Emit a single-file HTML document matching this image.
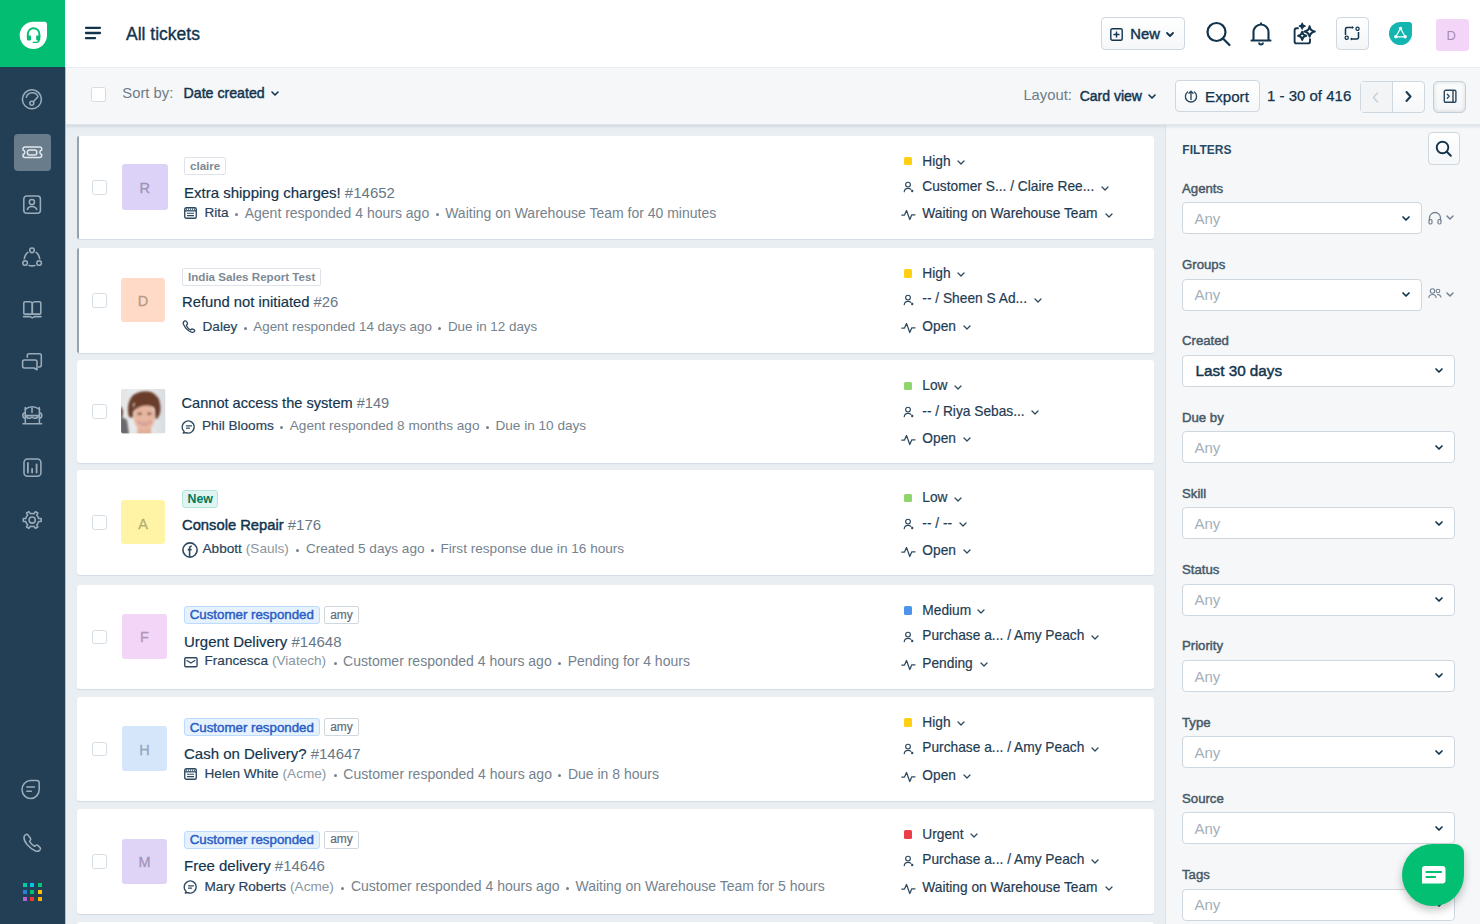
<!DOCTYPE html>
<html><head><meta charset="utf-8"><title>All tickets</title>
<style>
html,body{margin:0;padding:0;width:1480px;height:924px;overflow:hidden;background:#ebeff3;}
body{position:relative;font-family:"Liberation Sans",sans-serif;}
.t{position:absolute;white-space:nowrap;line-height:1;}
.b{position:absolute;box-sizing:border-box;}
.s{position:absolute;overflow:visible;}
</style></head><body>

<div class="b" style="left:65.00px;top:124.00px;width:1100.00px;height:800.00px;background:#e9eef2;"></div>
<div class="b" style="left:1165.00px;top:124.00px;width:315.00px;height:800.00px;background:#f5f7f9;border-left:1px solid #dde3e9;"></div>
<div class="b" style="left:65.00px;top:125.00px;width:1415.00px;height:4.00px;background:linear-gradient(rgba(18,52,77,0.10),rgba(18,52,77,0));"></div>
<div class="b" style="left:65.00px;top:67.00px;width:1415.00px;height:58.00px;background:#f5f7f9;border-top:1px solid #e9edf1;border-bottom:1px solid #dfe5ea;"></div>
<div class="b" style="left:65.00px;top:0.00px;width:1415.00px;height:67.00px;background:#ffffff;"></div>
<div class="b" style="left:0.00px;top:0.00px;width:65.00px;height:924.00px;background:#233f55;"></div>
<div class="b" style="left:0.00px;top:0.00px;width:65.00px;height:67.00px;background:#02bd72;"></div>
<div class="b" style="left:65.00px;top:67.00px;width:1.00px;height:857.00px;background:#b3c0ca;"></div>
<svg class="s" style="left:19.00px;top:21.00px;" width="29" height="29" viewBox="0 0 29 29" fill="none"><path d="M14.35 0.7 H25.5 a2.5 2.5 0 0 1 2.5 2.5 V14.35 A13.65 13.65 0 1 1 14.35 0.7 Z" fill="#fff"/><path d="M8.8 16 V13 A5.8 5.8 0 0 1 20.4 13 V16" stroke="#02bd72" stroke-width="1.9"/><rect x="7.9" y="14.5" width="4.1" height="4.9" rx="0.8" fill="#02bd72"/><rect x="17.2" y="14.5" width="4.1" height="4.9" rx="0.8" fill="#02bd72"/><path d="M20 19 Q20 21.4 17.5 21.4 H14.3" stroke="#02bd72" stroke-width="1.3" stroke-linecap="round"/></svg>
<div class="b" style="left:14.00px;top:134.00px;width:36.60px;height:36.70px;background:#687c8c;border-radius:4px;"></div>
<svg class="s" style="left:21.00px;top:88.00px;" width="22" height="22" viewBox="0 0 22 22" fill="none"><circle cx="10.9" cy="11.3" r="9.5" stroke="#9aacba" stroke-width="1.55" stroke-linecap="round" stroke-linejoin="round"/><path d="M5.3 9.3 A6.2 6.2 0 0 1 17 8.5" stroke="#9aacba" stroke-width="1.55" stroke-linecap="round" stroke-linejoin="round"/><circle cx="10.8" cy="15.3" r="2" stroke="#9aacba" stroke-width="1.55" stroke-linecap="round" stroke-linejoin="round"/><path d="M12.3 13.8 L16.6 9.2" stroke="#9aacba" stroke-width="1.55" stroke-linecap="round" stroke-linejoin="round"/></svg>
<svg class="s" style="left:21.00px;top:144.00px;" width="22" height="16" viewBox="0 0 22 16" fill="none"><path d="M4 2.9 H18.7 Q20.7 2.9 20.7 4.9 V5.9 A2.3 2.3 0 0 0 20.7 10.4 V11.4 Q20.7 13.4 18.7 13.4 H4 Q2 13.4 2 11.4 V10.4 A2.3 2.3 0 0 0 2 5.9 V4.9 Q2 2.9 4 2.9 Z" stroke="#e3e8ec" stroke-width="1.5" stroke-linecap="round" stroke-linejoin="round"/><rect x="6.45" y="6" width="9.3" height="4.9" rx="2" stroke="#e3e8ec" stroke-width="1.5" stroke-linecap="round" stroke-linejoin="round"/></svg>
<svg class="s" style="left:21.00px;top:194.00px;" width="22" height="22" viewBox="0 0 22 22" fill="none"><rect x="2.8" y="2" width="16.6" height="17.2" rx="3" stroke="#9aacba" stroke-width="1.55" stroke-linecap="round" stroke-linejoin="round"/><circle cx="10.9" cy="8" r="2.6" stroke="#9aacba" stroke-width="1.55" stroke-linecap="round" stroke-linejoin="round"/><path d="M6.4 15.5 Q7 12.4 10.9 12.4 Q14.8 12.4 15.8 15.5" stroke="#9aacba" stroke-width="1.55" stroke-linecap="round" stroke-linejoin="round"/></svg>
<svg class="s" style="left:21.00px;top:246.00px;" width="22" height="22" viewBox="0 0 22 22" fill="none"><circle cx="11" cy="4.3" r="2.3" stroke="#9aacba" stroke-width="1.55" stroke-linecap="round" stroke-linejoin="round"/><circle cx="4.1" cy="17" r="2.3" stroke="#9aacba" stroke-width="1.55" stroke-linecap="round" stroke-linejoin="round"/><circle cx="18.1" cy="17" r="2.3" stroke="#9aacba" stroke-width="1.55" stroke-linecap="round" stroke-linejoin="round"/><path d="M6.7 6.4 Q3.8 9 3.3 12.6" stroke="#9aacba" stroke-width="1.55" stroke-linecap="round" stroke-linejoin="round"/><path d="M15.3 6.4 Q18.2 9 18.7 12.6" stroke="#9aacba" stroke-width="1.55" stroke-linecap="round" stroke-linejoin="round"/><path d="M8 19.5 Q11 20.3 14 19.5" stroke="#9aacba" stroke-width="1.55" stroke-linecap="round" stroke-linejoin="round"/></svg>
<svg class="s" style="left:21.00px;top:298.00px;" width="22" height="22" viewBox="0 0 22 22" fill="none"><path d="M11.3 5 Q10.5 3.8 8.5 3.8 H4 Q2.8 3.8 2.8 5 V15.2 Q2.8 16.1 4 16.1 H11.3 Z" stroke="#9aacba" stroke-width="1.55" stroke-linecap="round" stroke-linejoin="round"/><path d="M11.3 5 Q12.1 3.8 14.1 3.8 H18.6 Q19.8 3.8 19.8 5 V15.2 Q19.8 16.1 18.6 16.1 H11.3 Z" stroke="#9aacba" stroke-width="1.55" stroke-linecap="round" stroke-linejoin="round"/><path d="M2.5 18.6 H9.3 L11.3 19.8 L13.3 18.6 H20.1" stroke="#9aacba" stroke-width="1.55" stroke-linecap="round" stroke-linejoin="round"/></svg>
<svg class="s" style="left:21.00px;top:351.00px;" width="22" height="22" viewBox="0 0 22 22" fill="none"><path d="M6.3 6.3 V4.6 Q6.3 2.8 8.1 2.8 H18.5 Q20.3 2.8 20.3 4.6 V14.1 Q20.3 15.9 18.5 15.9 H17.6" stroke="#9aacba" stroke-width="1.55" stroke-linecap="round" stroke-linejoin="round"/><path d="M3.4 9 H14.2 Q16 9 16 10.8 V18.8 L14.2 17.8 L13.2 16.9 H3.4 Q1.6 16.9 1.6 15.1 V10.8 Q1.6 9 3.4 9 Z" stroke="#9aacba" stroke-width="1.55" stroke-linecap="round" stroke-linejoin="round"/></svg>
<svg class="s" style="left:21.00px;top:403.00px;" width="22" height="22" viewBox="0 0 22 22" fill="none"><path d="M4.3 4.5 V20.5 M18.4 4.5 V20.5" stroke="#9aacba" stroke-width="1.55" stroke-linecap="round" stroke-linejoin="round"/><path d="M4.3 6.2 Q11 1.2 18.4 6.2" stroke="#9aacba" stroke-width="1.55" stroke-linecap="round" stroke-linejoin="round"/><path d="M11 5.2 V9.5" stroke="#9aacba" stroke-width="1.55" stroke-linecap="round" stroke-linejoin="round"/><path d="M4.3 12.6 H18.4" stroke="#9aacba" stroke-width="1.55" stroke-linecap="round" stroke-linejoin="round"/><path d="M5.5 13 Q6 15.5 8.5 15.3 Q10 15 11 14 Q12 15 13.5 15.3 Q16.5 15.5 17 13" stroke="#9aacba" stroke-width="1.55" stroke-linecap="round" stroke-linejoin="round"/><path d="M4 9.8 Q1.5 10.5 1.8 12.8 Q2.2 15 4.2 15 M18.6 9.8 Q21 10.5 20.8 12.8 Q20.5 15 18.5 15" stroke="#9aacba" stroke-width="1.55" stroke-linecap="round" stroke-linejoin="round"/><path d="M2 20.8 H20.6" stroke="#9aacba" stroke-width="1.55" stroke-linecap="round" stroke-linejoin="round"/></svg>
<svg class="s" style="left:21.00px;top:456.00px;" width="22" height="22" viewBox="0 0 22 22" fill="none"><rect x="3" y="3" width="16.9" height="17.2" rx="3.5" stroke="#9aacba" stroke-width="1.55" stroke-linecap="round" stroke-linejoin="round"/><path d="M6.9 6.9 V16.6 M11.1 12.9 V16.6 M15.6 8.3 V16.6" stroke="#9aacba" stroke-width="1.8" stroke-linecap="round"/></svg>
<svg class="s" style="left:21.00px;top:509.00px;" width="22" height="22" viewBox="0 0 22 22" fill="none"><path d="M17.13 8.11 L17.63 9.52 L20.09 9.59 L20.09 12.41 L17.63 12.48 L17.13 13.89 L16.67 14.69 L15.70 15.83 L16.86 17.99 L14.43 19.40 L13.13 17.31 L11.66 17.58 L10.74 17.58 L9.27 17.31 L7.97 19.40 L5.54 17.99 L6.70 15.83 L5.73 14.69 L5.27 13.89 L4.77 12.48 L2.31 12.41 L2.31 9.59 L4.77 9.52 L5.27 8.11 L5.73 7.31 L6.70 6.17 L5.54 4.01 L7.97 2.60 L9.27 4.69 L10.74 4.42 L11.66 4.42 L13.13 4.69 L14.43 2.60 L16.86 4.01 L15.70 6.17 L16.67 7.31 Z" stroke="#9aacba" stroke-width="1.55" stroke-linecap="round" stroke-linejoin="round"/><circle cx="11.2" cy="11" r="3.1" stroke="#9aacba" stroke-width="1.55" stroke-linecap="round" stroke-linejoin="round"/></svg>
<svg class="s" style="left:20.20px;top:779.00px;" width="22" height="22" viewBox="0 0 22 22" fill="none"><path d="M10.2 1.5 H16.9 Q19.2 1.5 19.2 3.8 V10.2 A8.6 9 0 1 1 10.2 1.5 Z" stroke="#9aacba" stroke-width="1.55" stroke-linecap="round" stroke-linejoin="round"/><path d="M6.9 8 H14.4 M6.9 12.2 H11.3" stroke="#9aacba" stroke-width="1.6" stroke-linecap="round"/></svg>
<svg class="s" style="left:21.00px;top:832.00px;" width="22" height="22" viewBox="0 0 22 22" fill="none"><path d="M5.5 2.2 Q3.5 2.8 3 5 Q2.8 8.5 6 12.5 Q10 17 14.5 19 Q17 19.8 18.7 18.3 Q20 17 19.2 15.8 L17 13.6 Q15.8 12.6 14.6 13.5 L13.7 14.3 Q10.5 12.5 8.5 9.3 L9.3 8.4 Q10.2 7.2 9.3 6 L7 3 Q6.3 2 5.5 2.2 Z" stroke="#9aacba" stroke-width="1.55" stroke-linecap="round" stroke-linejoin="round"/></svg>
<div class="b" style="left:23.00px;top:882.60px;width:4.00px;height:4.00px;background:#00c9a7;"></div>
<div class="b" style="left:30.30px;top:882.60px;width:4.00px;height:4.00px;background:#00c6f0;"></div>
<div class="b" style="left:37.60px;top:882.60px;width:4.00px;height:4.00px;background:#00c873;"></div>
<div class="b" style="left:23.00px;top:889.90px;width:4.00px;height:4.00px;background:#2b7fd4;"></div>
<div class="b" style="left:30.30px;top:889.90px;width:4.00px;height:4.00px;background:#00c26e;"></div>
<div class="b" style="left:37.60px;top:889.90px;width:4.00px;height:4.00px;background:#ffc107;"></div>
<div class="b" style="left:23.00px;top:897.20px;width:4.00px;height:4.00px;background:#b466d0;"></div>
<div class="b" style="left:30.30px;top:897.20px;width:4.00px;height:4.00px;background:#ee3a2b;"></div>
<div class="b" style="left:37.60px;top:897.20px;width:4.00px;height:4.00px;background:#ffb300;"></div>
<svg class="s" style="left:85.00px;top:26.00px;" width="16" height="14" viewBox="0 0 16 14" fill="none"><path d="M1 1.8 H15 M1 7 H15 M1 12.2 H10" stroke="#12344d" stroke-width="2.3" stroke-linecap="round"/></svg>
<div class="t" style="left:126.00px;top:25.69px;font-size:17.5px;font-weight:400;color:#12344d;-webkit-text-stroke:0.35px currentColor;">All tickets</div>
<div class="b" style="left:1101.00px;top:17.00px;width:84.00px;height:33.00px;background:linear-gradient(#fff,#f5f7f9);border:1px solid #cfd7df;border-radius:4px;"></div>
<svg class="s" style="left:1110.00px;top:28.00px;" width="13" height="13" viewBox="0 0 13 13" fill="none"><rect x="0.8" y="0.8" width="11.4" height="11.4" rx="1.5" stroke="#12344d" stroke-width="1.4"/><path d="M6.5 3.5 V9.5 M3.5 6.5 H9.5" stroke="#12344d" stroke-width="1.4"/></svg>
<div class="t" style="left:1130.30px;top:26.81px;font-size:14.75px;font-weight:400;color:#12344d;-webkit-text-stroke:0.45px currentColor;">New</div>
<svg class="s" style="left:1165.50px;top:32.00px;" width="8" height="6" viewBox="0 0 8 6" fill="none"><path d="M1 1 L4 4 L7 1" stroke="#12344d" stroke-width="1.8" stroke-linecap="round" stroke-linejoin="round"/></svg>
<svg class="s" style="left:1206.00px;top:21.00px;" width="25" height="25" viewBox="0 0 25 25" fill="none"><circle cx="10.5" cy="11" r="9" stroke="#12344d" stroke-width="2.2"/><path d="M17 17.5 L23.5 24" stroke="#12344d" stroke-width="2.2" stroke-linecap="round"/></svg>
<svg class="s" style="left:1250.00px;top:21.00px;" width="22" height="24" viewBox="0 0 22 24" fill="none"><path d="M3.5 19 V11 A7.5 7.5 0 0 1 18.5 11 V19" stroke="#12344d" stroke-width="2.1"/><path d="M1.5 19.5 H20.5" stroke="#12344d" stroke-width="2.1" stroke-linecap="round"/><path d="M9 21.5 A2 2 0 0 0 13 21.5" stroke="#12344d" stroke-width="1.8"/><path d="M11 1.5 V3" stroke="#12344d" stroke-width="2"/></svg>
<svg class="s" style="left:1288.00px;top:18.00px;" width="32" height="32" viewBox="0 0 32 32" fill="none"><path d="M10 10.2 H8.6 Q6.6 10.2 6.6 12.2 V23.4 Q6.6 25.4 8.6 25.4 H20 Q22 25.4 22 23.4 V21.1" stroke="#12344d" stroke-width="1.9" stroke-linecap="round"/><path d="M21.6 8.3 Q22.328000000000003 12.772 26.8 13.5 Q22.328000000000003 14.228 21.6 18.7 Q20.872 14.228 16.400000000000002 13.5 Q20.872 12.772 21.6 8.3 Z" stroke="#12344d" stroke-width="2.1" stroke-linejoin="round"/><path d="M14.2 13.700000000000001 Q14.774 17.226 18.299999999999997 17.8 Q14.774 18.374000000000002 14.2 21.9 Q13.626 18.374000000000002 10.1 17.8 Q13.626 17.226 14.2 13.700000000000001 Z" stroke="#12344d" stroke-width="2" stroke-linejoin="round"/><path d="M14.2 5.3 Q14.591999999999999 7.707999999999999 17.0 8.1 Q14.591999999999999 8.491999999999999 14.2 10.899999999999999 Q13.808 8.491999999999999 11.399999999999999 8.1 Q13.808 7.707999999999999 14.2 5.3 Z" stroke="#12344d" stroke-width="1.5" stroke-linejoin="round" fill="#12344d"/></svg>
<div class="b" style="left:1336.00px;top:17.00px;width:33.00px;height:33.00px;background:linear-gradient(#fff,#f3f5f7);border:1px solid #cfd7df;border-radius:4px;"></div>
<svg class="s" style="left:1344.00px;top:25.00px;" width="16" height="17" viewBox="0 0 16 17" fill="none"><path d="M8 2.5 H3 a1.5 1.5 0 0 0 -1.5 1.5 V10" stroke="#12344d" stroke-width="1.5"/><path d="M8 14 H13 a1.5 1.5 0 0 0 1.5 -1.5 V7" stroke="#12344d" stroke-width="1.5"/><circle cx="13.5" cy="3.8" r="1.6" stroke="#12344d" stroke-width="1.3"/><circle cx="2.7" cy="12.8" r="1.6" stroke="#12344d" stroke-width="1.3"/><path d="M8 1 L10 2.5 L8 4 Z M8 12.5 L6 14 L8 15.5 Z" fill="#12344d"/></svg>
<svg class="s" style="left:1389.00px;top:22.00px;" width="24" height="24" viewBox="0 0 24 24" fill="none"><path d="M11.5 0 H20 a3 3 0 0 1 3 3 V11.5 A11.5 11.5 0 1 1 11.5 0 Z" fill="#13b5b1"/><path d="M11.5 6.5 L6.8 14.8 H16.2 Z" stroke="#fff" stroke-width="1.2" stroke-linejoin="round"/><circle cx="11.5" cy="6.5" r="1.7" fill="#fff"/><circle cx="6.8" cy="14.8" r="1.7" fill="#fff"/><circle cx="16.2" cy="14.8" r="1.7" fill="#fff"/></svg>
<div class="b" style="left:1436.00px;top:18.50px;width:32.50px;height:32.50px;background:#f3d6f7;border-radius:3px;"></div>
<div class="t" style="left:1446.50px;top:29.00px;font-size:13px;font-weight:400;color:#a98bb4;">D</div>
<div class="b" style="left:91.00px;top:87.00px;width:14.50px;height:14.50px;background:#fff;border:1.2px solid #d5dde4;border-radius:2.5px;"></div>
<div class="t" style="left:122.30px;top:85.67px;font-size:14.8px;font-weight:400;color:#6f7c87;">Sort by:</div>
<div class="t" style="left:183.50px;top:86.18px;font-size:14.2px;font-weight:400;color:#12344d;-webkit-text-stroke:0.45px currentColor;">Date created</div>
<svg class="s" style="left:270.50px;top:91.00px;" width="8" height="6" viewBox="0 0 8 6" fill="none"><path d="M1 1 L4 4 L7 1" stroke="#12344d" stroke-width="1.6" stroke-linecap="round" stroke-linejoin="round"/></svg>
<div class="t" style="left:1023.40px;top:88.47px;font-size:14.8px;font-weight:400;color:#6f7c87;">Layout:</div>
<div class="t" style="left:1079.70px;top:89.45px;font-size:14px;font-weight:400;color:#12344d;-webkit-text-stroke:0.45px currentColor;">Card view</div>
<svg class="s" style="left:1147.50px;top:94.00px;" width="8" height="6" viewBox="0 0 8 6" fill="none"><path d="M1 1 L4 4 L7 1" stroke="#12344d" stroke-width="1.6" stroke-linecap="round" stroke-linejoin="round"/></svg>
<div class="b" style="left:1175.00px;top:80.00px;width:85.00px;height:32.00px;background:linear-gradient(#fff,#f5f7f9);border:1px solid #cfd7df;border-radius:4px;"></div>
<svg class="s" style="left:1183.50px;top:89.00px;" width="14" height="14" viewBox="0 0 14 14" fill="none"><path d="M3.6 3 A5.6 5.6 0 1 0 10.4 3" stroke="#2a475d" stroke-width="1.35" stroke-linecap="round"/><path d="M7 10.5 V2.2 M5 4.3 L7 2.2 L9 4.3" stroke="#2a475d" stroke-width="1.35" stroke-linecap="round" stroke-linejoin="round"/></svg>
<div class="t" style="left:1205.00px;top:88.93px;font-size:15.2px;font-weight:400;color:#12344d;-webkit-text-stroke:0.25px currentColor;">Export</div>
<div class="t" style="left:1267.00px;top:88.10px;font-size:15px;font-weight:400;color:#12344d;-webkit-text-stroke:0.25px currentColor;">1 - 30 of 416</div>
<div class="b" style="left:1359.50px;top:80.50px;width:65.00px;height:32.00px;background:linear-gradient(#fff,#f5f7f9);border:1px solid #cfd7df;border-radius:4px;overflow:hidden;"></div>
<div class="b" style="left:1360.50px;top:81.50px;width:31.00px;height:30.00px;background:#f2f4f6;"></div>
<div class="b" style="left:1391.50px;top:81.00px;width:1.30px;height:31.00px;background:#cfd7df;"></div>
<svg class="s" style="left:1372.00px;top:91.50px;" width="7" height="11" viewBox="0 0 7 11" fill="none"><path d="M5.5 1 L1.5 5.5 L5.5 10" stroke="#c9cfd5" stroke-width="1.4" stroke-linecap="round" stroke-linejoin="round"/></svg>
<svg class="s" style="left:1404.50px;top:91.00px;" width="7" height="11" viewBox="0 0 7 11" fill="none"><path d="M1.5 1 L5.5 5.5 L1.5 10" stroke="#1e3c53" stroke-width="2.1" stroke-linecap="round" stroke-linejoin="round"/></svg>
<div class="b" style="left:1433.30px;top:80.50px;width:33.00px;height:32.00px;background:linear-gradient(#fcfdfd,#f3f5f7);border:1px solid #c5cfd8;border-radius:5px;box-shadow:inset 0 0 4px rgba(18,52,77,0.16);"></div>
<svg class="s" style="left:1443.00px;top:88.50px;" width="15" height="15" viewBox="0 0 15 15" fill="none"><rect x="1.3" y="1.3" width="11.6" height="12" rx="1.3" stroke="#2a475d" stroke-width="1.4"/><path d="M10 1.5 V13" stroke="#2a475d" stroke-width="1.4"/><path d="M4.3 5.3 L6.2 7.3 L4.3 9.3" stroke="#2a475d" stroke-width="1.3" stroke-linecap="round" stroke-linejoin="round"/></svg>
<div class="b" style="left:76.50px;top:135.70px;width:1077.50px;height:103.60px;background:#fff;border-radius:3px;box-shadow:0 1px 1px rgba(18,52,77,0.10);"></div>
<div class="b" style="left:76.50px;top:135.70px;width:2.00px;height:103.60px;background:#95a3af;border-radius:2px 0 0 2px;"></div>
<div class="b" style="left:92.00px;top:180.30px;width:14.50px;height:14.50px;background:#fff;border:1.2px solid #d5dde4;border-radius:2.5px;"></div>
<div class="b" style="left:122.00px;top:164.30px;width:45.50px;height:45.50px;background:#dcd1f6;border-radius:3px;"></div>
<div class="t" style="left:122px;top:165.8px;width:45.5px;height:45.5px;line-height:45.5px;text-align:center;font-size:14.5px;color:#9e92b8;-webkit-text-stroke:0.3px currentColor;">R</div>
<div class="b" style="left:184.00px;top:156.50px;width:42.31px;height:18.00px;background:#fff;border:1px solid #dde3e8;border-radius:2px;"></div>
<div class="t" style="left:190.00px;top:159.68px;font-size:11.6px;font-weight:700;color:#7d8a95;">claire</div>
<div class="t" style="left:184.00px;top:185.30px;font-size:15px;font-weight:400;color:#12344d;-webkit-text-stroke:0.18px currentColor;">Extra shipping charges!</div>
<div class="t" style="left:344.87px;top:185.30px;font-size:15px;font-weight:400;color:#687885;">#14652</div>
<svg class="s" style="left:184.00px;top:206.50px;" width="13" height="12" viewBox="0 0 13 12" fill="none"><rect x="0.75" y="0.75" width="11.5" height="10.5" rx="1.5" stroke="#2f4a60" stroke-width="1.4"/><path d="M1 3.8 H12" stroke="#2f4a60" stroke-width="1.3"/><path d="M2 2.2 H11" stroke="#2f4a60" stroke-width="1.3" stroke-dasharray="1 1"/><path d="M3 6.2 H10 M3 8.6 H10" stroke="#2f4a60" stroke-width="1.1"/></svg>
<div class="t" style="left:204.50px;top:205.99px;font-size:13.6px;font-weight:400;color:#28435a;-webkit-text-stroke:0.18px currentColor;">Rita</div>
<div class="b" style="left:235.19px;top:213.00px;width:3.00px;height:3.00px;background:#75828e;border-radius:50%;"></div>
<div class="t" style="left:244.69px;top:205.65px;font-size:14px;font-weight:400;color:#75828e;">Agent responded 4 hours ago</div>
<div class="b" style="left:435.67px;top:213.00px;width:3.00px;height:3.00px;background:#75828e;border-radius:50%;"></div>
<div class="t" style="left:445.17px;top:205.65px;font-size:14px;font-weight:400;color:#75828e;">Waiting on Warehouse Team for 40 minutes</div>
<div class="b" style="left:903.50px;top:157.00px;width:8.50px;height:8.30px;background:#ffd012;border-radius:1.5px;"></div>
<div class="t" style="left:922.30px;top:154.66px;font-size:13.75px;font-weight:400;color:#1f3b52;-webkit-text-stroke:0.18px currentColor;">High</div>
<svg class="s" style="left:956.58px;top:160.00px;" width="8" height="6" viewBox="0 0 8 6" fill="none"><path d="M1 1 L4 4 L7 1" stroke="#2f4a5f" stroke-width="1.3" stroke-linecap="round" stroke-linejoin="round"/></svg>
<svg class="s" style="left:902.50px;top:181.20px;" width="12" height="12" viewBox="0 0 12 12" fill="none"><circle cx="5" cy="3.6" r="2.4" stroke="#2f4a5f" stroke-width="1.15"/><path d="M1.2 10.8 Q1.5 7.3 5 7.3 Q7 7.3 7.9 8.4" stroke="#2f4a5f" stroke-width="1.15" stroke-linecap="round"/><circle cx="9.2" cy="10" r="1.2" fill="#2f4a5f"/></svg>
<div class="t" style="left:922.30px;top:180.06px;font-size:13.75px;font-weight:400;color:#1f3b52;-webkit-text-stroke:0.18px currentColor;">Customer S... / Claire Ree...</div>
<svg class="s" style="left:1100.74px;top:185.50px;" width="8" height="6" viewBox="0 0 8 6" fill="none"><path d="M1 1 L4 4 L7 1" stroke="#2f4a5f" stroke-width="1.3" stroke-linecap="round" stroke-linejoin="round"/></svg>
<svg class="s" style="left:901.00px;top:209.20px;" width="15" height="12" viewBox="0 0 15 12" fill="none"><path d="M0.8 6 H3.5 L5.5 1.5 L8.8 10.5 L10.8 5.8 H14" stroke="#2f4a5f" stroke-width="1.25" stroke-linecap="round" stroke-linejoin="round"/></svg>
<div class="t" style="left:922.30px;top:207.36px;font-size:13.75px;font-weight:400;color:#1f3b52;-webkit-text-stroke:0.18px currentColor;">Waiting on Warehouse Team</div>
<svg class="s" style="left:1104.58px;top:212.70px;" width="8" height="6" viewBox="0 0 8 6" fill="none"><path d="M1 1 L4 4 L7 1" stroke="#2f4a5f" stroke-width="1.3" stroke-linecap="round" stroke-linejoin="round"/></svg>
<div class="b" style="left:76.50px;top:248.00px;width:1077.50px;height:104.60px;background:#fff;border-radius:3px;box-shadow:0 1px 1px rgba(18,52,77,0.10);"></div>
<div class="b" style="left:76.50px;top:248.00px;width:2.00px;height:104.60px;background:#95a3af;border-radius:2px 0 0 2px;"></div>
<div class="b" style="left:92.00px;top:293.10px;width:14.50px;height:14.50px;background:#fff;border:1.2px solid #d5dde4;border-radius:2.5px;"></div>
<div class="b" style="left:121.00px;top:277.70px;width:44.20px;height:44.20px;background:#ffdac6;border-radius:3px;"></div>
<div class="t" style="left:121px;top:279.2px;width:44.2px;height:44.2px;line-height:44.2px;text-align:center;font-size:14.5px;color:#b39a8a;-webkit-text-stroke:0.3px currentColor;">D</div>
<div class="b" style="left:182.00px;top:267.50px;width:139.36px;height:18.00px;background:#fff;border:1px solid #dde3e8;border-radius:2px;"></div>
<div class="t" style="left:188.00px;top:270.68px;font-size:11.6px;font-weight:700;color:#7d8a95;">India Sales Report Test</div>
<div class="t" style="left:182.00px;top:295.17px;font-size:14.8px;font-weight:400;color:#12344d;-webkit-text-stroke:0.18px currentColor;">Refund not initiated</div>
<div class="t" style="left:313.62px;top:295.17px;font-size:14.8px;font-weight:400;color:#687885;">#26</div>
<svg class="s" style="left:182.00px;top:320.30px;" width="14" height="13" viewBox="0 0 14 13" fill="none"><path d="M2.8 0.8 Q4.4 0.6 5.2 2.6 L5.5 4 Q4.6 5 4.3 5.5 Q6 8.8 8.5 10 Q9.3 9.3 10 8.9 L11.5 9.4 Q13.2 10.3 12.6 11.3 Q11.5 12.6 10 12.3 Q4.5 10.8 1.4 4.3 Q0.7 2 2.8 0.8 Z" stroke="#2f4a60" stroke-width="1.3" stroke-linejoin="round"/></svg>
<div class="t" style="left:202.50px;top:319.69px;font-size:13.6px;font-weight:400;color:#28435a;-webkit-text-stroke:0.18px currentColor;">Daley</div>
<div class="b" style="left:243.77px;top:326.70px;width:3.00px;height:3.00px;background:#75828e;border-radius:50%;"></div>
<div class="t" style="left:253.27px;top:319.86px;font-size:13.4px;font-weight:400;color:#75828e;">Agent responded 14 days ago</div>
<div class="b" style="left:438.45px;top:326.70px;width:3.00px;height:3.00px;background:#75828e;border-radius:50%;"></div>
<div class="t" style="left:447.95px;top:319.86px;font-size:13.4px;font-weight:400;color:#75828e;">Due in 12 days</div>
<div class="b" style="left:903.50px;top:269.30px;width:8.50px;height:8.30px;background:#ffd012;border-radius:1.5px;"></div>
<div class="t" style="left:922.30px;top:266.96px;font-size:13.75px;font-weight:400;color:#1f3b52;-webkit-text-stroke:0.18px currentColor;">High</div>
<svg class="s" style="left:956.58px;top:272.30px;" width="8" height="6" viewBox="0 0 8 6" fill="none"><path d="M1 1 L4 4 L7 1" stroke="#2f4a5f" stroke-width="1.3" stroke-linecap="round" stroke-linejoin="round"/></svg>
<svg class="s" style="left:902.50px;top:293.50px;" width="12" height="12" viewBox="0 0 12 12" fill="none"><circle cx="5" cy="3.6" r="2.4" stroke="#2f4a5f" stroke-width="1.15"/><path d="M1.2 10.8 Q1.5 7.3 5 7.3 Q7 7.3 7.9 8.4" stroke="#2f4a5f" stroke-width="1.15" stroke-linecap="round"/><circle cx="9.2" cy="10" r="1.2" fill="#2f4a5f"/></svg>
<div class="t" style="left:922.30px;top:292.36px;font-size:13.75px;font-weight:400;color:#1f3b52;-webkit-text-stroke:0.18px currentColor;">-- / Sheen S Ad...</div>
<svg class="s" style="left:1033.52px;top:297.80px;" width="8" height="6" viewBox="0 0 8 6" fill="none"><path d="M1 1 L4 4 L7 1" stroke="#2f4a5f" stroke-width="1.3" stroke-linecap="round" stroke-linejoin="round"/></svg>
<svg class="s" style="left:901.00px;top:321.50px;" width="15" height="12" viewBox="0 0 15 12" fill="none"><path d="M0.8 6 H3.5 L5.5 1.5 L8.8 10.5 L10.8 5.8 H14" stroke="#2f4a5f" stroke-width="1.25" stroke-linecap="round" stroke-linejoin="round"/></svg>
<div class="t" style="left:922.30px;top:319.66px;font-size:13.75px;font-weight:400;color:#1f3b52;-webkit-text-stroke:0.18px currentColor;">Open</div>
<svg class="s" style="left:962.94px;top:325.00px;" width="8" height="6" viewBox="0 0 8 6" fill="none"><path d="M1 1 L4 4 L7 1" stroke="#2f4a5f" stroke-width="1.3" stroke-linecap="round" stroke-linejoin="round"/></svg>
<div class="b" style="left:76.50px;top:360.30px;width:1077.50px;height:102.40px;background:#fff;border-radius:3px;box-shadow:0 1px 1px rgba(18,52,77,0.10);"></div>
<div class="b" style="left:92.00px;top:404.30px;width:14.50px;height:14.50px;background:#fff;border:1.2px solid #d5dde4;border-radius:2.5px;"></div>
<svg class="s" style="left:121px;top:388.5px" width="44.5" height="44.5" viewBox="0 0 44 44"><defs><clipPath id="avc"><rect width="44" height="44" rx="2"/></clipPath><filter id="bl" x="-20%" y="-20%" width="140%" height="140%"><feGaussianBlur stdDeviation="1.1"/></filter><linearGradient id="bgph" x1="0" y1="0" x2="1" y2="0"><stop offset="0" stop-color="#e4e5e6"/><stop offset="0.5" stop-color="#eceeef"/><stop offset="1" stop-color="#d9dcdf"/></linearGradient></defs><g clip-path="url(#avc)"><rect width="44" height="44" fill="url(#bgph)"/><g filter="url(#bl)"><path d="M-1 29 Q3 27 6 31 L8 45 L-1 45 Z" fill="#6a6b6e"/><path d="M-1 17 Q2 18 2 24 L1 29 L-1 29 Z" fill="#6e4434"/><path d="M10 45 Q12 38 22 37 Q33 38 35 45 Z" fill="#e9e6e4"/><path d="M7.5 27 Q5 13 12 6 Q20 0.5 30 3 Q38.5 7 39 17 Q39.5 25 36 29 L34 30 L33 14 L12 14 L12 28 Q9.5 29 7.5 27 Z" fill="#6b3c2b"/><path d="M16 45 L16.5 36 Q23 40 29.5 36 L30 45 Z" fill="#dfae98"/><ellipse cx="23" cy="27.5" rx="10.5" ry="14" fill="#e6b6a0"/><path d="M11.5 23 Q12 14 18 10.5 Q26 7 33 11.5 Q35 15 35.3 21 Q32 16.5 26 16.2 Q19 16.5 14.5 20 Z" fill="#6b3c2b"/><ellipse cx="18.5" cy="24.5" rx="2.3" ry="1.3" fill="#7d5040"/><ellipse cx="28" cy="24.5" rx="2.3" ry="1.3" fill="#7d5040"/><path d="M17 32.5 Q23 38 29.5 32.5 Q23 35 17 32.5 Z" fill="#c06a6e" stroke="#c06a6e" stroke-width="1.2"/><path d="M18.5 33.2 Q23 35.2 28 33.2" stroke="#f2e0dc" stroke-width="0.9" fill="none"/></g></g></svg>
<div class="t" style="left:181.50px;top:396.04px;font-size:14.6px;font-weight:400;color:#12344d;-webkit-text-stroke:0.18px currentColor;">Cannot access the system</div>
<div class="t" style="left:356.76px;top:396.04px;font-size:14.6px;font-weight:400;color:#687885;">#149</div>
<svg class="s" style="left:181.50px;top:419.50px;" width="14" height="14" viewBox="0 0 14 14" fill="none"><path d="M2.2 11.5 A6 6 0 1 1 4 12.6 L1.2 13 Z" stroke="#2f4a60" stroke-width="1.3" stroke-linejoin="round"/><path d="M4.5 5.8 H9.5 M4.5 8.2 H7.5" stroke="#2f4a60" stroke-width="1.3" stroke-linecap="round"/></svg>
<div class="t" style="left:202.00px;top:419.09px;font-size:13.6px;font-weight:400;color:#28435a;-webkit-text-stroke:0.18px currentColor;">Phil Blooms</div>
<div class="b" style="left:280.28px;top:426.10px;width:3.00px;height:3.00px;background:#75828e;border-radius:50%;"></div>
<div class="t" style="left:289.78px;top:419.09px;font-size:13.6px;font-weight:400;color:#75828e;">Agent responded 8 months ago</div>
<div class="b" style="left:485.98px;top:426.10px;width:3.00px;height:3.00px;background:#75828e;border-radius:50%;"></div>
<div class="t" style="left:495.48px;top:419.09px;font-size:13.6px;font-weight:400;color:#75828e;">Due in 10 days</div>
<div class="b" style="left:903.50px;top:381.60px;width:8.50px;height:8.30px;background:#8fd46c;border-radius:1.5px;"></div>
<div class="t" style="left:922.30px;top:379.26px;font-size:13.75px;font-weight:400;color:#1f3b52;-webkit-text-stroke:0.18px currentColor;">Low</div>
<svg class="s" style="left:953.53px;top:384.60px;" width="8" height="6" viewBox="0 0 8 6" fill="none"><path d="M1 1 L4 4 L7 1" stroke="#2f4a5f" stroke-width="1.3" stroke-linecap="round" stroke-linejoin="round"/></svg>
<svg class="s" style="left:902.50px;top:405.80px;" width="12" height="12" viewBox="0 0 12 12" fill="none"><circle cx="5" cy="3.6" r="2.4" stroke="#2f4a5f" stroke-width="1.15"/><path d="M1.2 10.8 Q1.5 7.3 5 7.3 Q7 7.3 7.9 8.4" stroke="#2f4a5f" stroke-width="1.15" stroke-linecap="round"/><circle cx="9.2" cy="10" r="1.2" fill="#2f4a5f"/></svg>
<div class="t" style="left:922.30px;top:404.66px;font-size:13.75px;font-weight:400;color:#1f3b52;-webkit-text-stroke:0.18px currentColor;">-- / Riya Sebas...</div>
<svg class="s" style="left:1031.21px;top:410.10px;" width="8" height="6" viewBox="0 0 8 6" fill="none"><path d="M1 1 L4 4 L7 1" stroke="#2f4a5f" stroke-width="1.3" stroke-linecap="round" stroke-linejoin="round"/></svg>
<svg class="s" style="left:901.00px;top:433.80px;" width="15" height="12" viewBox="0 0 15 12" fill="none"><path d="M0.8 6 H3.5 L5.5 1.5 L8.8 10.5 L10.8 5.8 H14" stroke="#2f4a5f" stroke-width="1.25" stroke-linecap="round" stroke-linejoin="round"/></svg>
<div class="t" style="left:922.30px;top:431.96px;font-size:13.75px;font-weight:400;color:#1f3b52;-webkit-text-stroke:0.18px currentColor;">Open</div>
<svg class="s" style="left:962.94px;top:437.30px;" width="8" height="6" viewBox="0 0 8 6" fill="none"><path d="M1 1 L4 4 L7 1" stroke="#2f4a5f" stroke-width="1.3" stroke-linecap="round" stroke-linejoin="round"/></svg>
<div class="b" style="left:76.50px;top:470.00px;width:1077.50px;height:104.70px;background:#fff;border-radius:3px;box-shadow:0 1px 1px rgba(18,52,77,0.10);"></div>
<div class="b" style="left:92.00px;top:515.15px;width:14.50px;height:14.50px;background:#fff;border:1.2px solid #d5dde4;border-radius:2.5px;"></div>
<div class="b" style="left:121.00px;top:500.30px;width:44.00px;height:44.00px;background:#fff4a5;border-radius:3px;"></div>
<div class="t" style="left:121px;top:501.8px;width:44px;height:44px;line-height:44px;text-align:center;font-size:14.5px;color:#b5ad70;-webkit-text-stroke:0.3px currentColor;">A</div>
<div class="b" style="left:182.00px;top:490.00px;width:36.30px;height:18.00px;background:#e0f5f1;border:1px solid #b4e5da;border-radius:3px;"></div>
<div class="t" style="left:187.50px;top:492.79px;font-size:12.3px;font-weight:700;color:#00795b;">New</div>
<div class="t" style="left:182.00px;top:517.61px;font-size:14.75px;font-weight:400;color:#12344d;-webkit-text-stroke:0.45px currentColor;">Console Repair</div>
<div class="t" style="left:287.77px;top:517.40px;font-size:15px;font-weight:400;color:#687885;">#176</div>
<svg class="s" style="left:182.00px;top:541.50px;" width="16" height="16" viewBox="0 0 16 16" fill="none"><circle cx="8" cy="8" r="7.1" stroke="#2f4a60" stroke-width="1.6"/><path d="M9.8 4.3 Q7.8 3.9 7.6 6 V14.8 M5.8 7.6 H9.6" stroke="#2f4a60" stroke-width="1.6"/></svg>
<div class="t" style="left:202.50px;top:542.09px;font-size:13.6px;font-weight:400;color:#28435a;-webkit-text-stroke:0.18px currentColor;">Abbott</div>
<div class="t" style="left:245.81px;top:542.09px;font-size:13.6px;font-weight:400;color:#8a96a0;">(Sauls)</div>
<div class="b" style="left:296.38px;top:549.10px;width:3.00px;height:3.00px;background:#75828e;border-radius:50%;"></div>
<div class="t" style="left:305.88px;top:542.09px;font-size:13.6px;font-weight:400;color:#75828e;">Created 5 days ago</div>
<div class="b" style="left:431.03px;top:549.10px;width:3.00px;height:3.00px;background:#75828e;border-radius:50%;"></div>
<div class="t" style="left:440.53px;top:542.09px;font-size:13.6px;font-weight:400;color:#75828e;">First response due in 16 hours</div>
<div class="b" style="left:903.50px;top:493.60px;width:8.50px;height:8.30px;background:#8fd46c;border-radius:1.5px;"></div>
<div class="t" style="left:922.30px;top:491.26px;font-size:13.75px;font-weight:400;color:#1f3b52;-webkit-text-stroke:0.18px currentColor;">Low</div>
<svg class="s" style="left:953.53px;top:496.60px;" width="8" height="6" viewBox="0 0 8 6" fill="none"><path d="M1 1 L4 4 L7 1" stroke="#2f4a5f" stroke-width="1.3" stroke-linecap="round" stroke-linejoin="round"/></svg>
<svg class="s" style="left:902.50px;top:517.80px;" width="12" height="12" viewBox="0 0 12 12" fill="none"><circle cx="5" cy="3.6" r="2.4" stroke="#2f4a5f" stroke-width="1.15"/><path d="M1.2 10.8 Q1.5 7.3 5 7.3 Q7 7.3 7.9 8.4" stroke="#2f4a5f" stroke-width="1.15" stroke-linecap="round"/><circle cx="9.2" cy="10" r="1.2" fill="#2f4a5f"/></svg>
<div class="t" style="left:922.30px;top:516.66px;font-size:13.75px;font-weight:400;color:#1f3b52;-webkit-text-stroke:0.18px currentColor;">-- / --</div>
<svg class="s" style="left:958.58px;top:522.10px;" width="8" height="6" viewBox="0 0 8 6" fill="none"><path d="M1 1 L4 4 L7 1" stroke="#2f4a5f" stroke-width="1.3" stroke-linecap="round" stroke-linejoin="round"/></svg>
<svg class="s" style="left:901.00px;top:545.80px;" width="15" height="12" viewBox="0 0 15 12" fill="none"><path d="M0.8 6 H3.5 L5.5 1.5 L8.8 10.5 L10.8 5.8 H14" stroke="#2f4a5f" stroke-width="1.25" stroke-linecap="round" stroke-linejoin="round"/></svg>
<div class="t" style="left:922.30px;top:543.96px;font-size:13.75px;font-weight:400;color:#1f3b52;-webkit-text-stroke:0.18px currentColor;">Open</div>
<svg class="s" style="left:962.94px;top:549.30px;" width="8" height="6" viewBox="0 0 8 6" fill="none"><path d="M1 1 L4 4 L7 1" stroke="#2f4a5f" stroke-width="1.3" stroke-linecap="round" stroke-linejoin="round"/></svg>
<div class="b" style="left:76.50px;top:585.00px;width:1077.50px;height:103.70px;background:#fff;border-radius:3px;box-shadow:0 1px 1px rgba(18,52,77,0.10);"></div>
<div class="b" style="left:92.00px;top:629.65px;width:14.50px;height:14.50px;background:#fff;border:1.2px solid #d5dde4;border-radius:2.5px;"></div>
<div class="b" style="left:122.00px;top:613.70px;width:45.00px;height:45.00px;background:#f2d5f7;border-radius:3px;"></div>
<div class="t" style="left:122px;top:615.2px;width:45px;height:45px;line-height:45px;text-align:center;font-size:14.5px;color:#b297b8;-webkit-text-stroke:0.3px currentColor;">F</div>
<div class="b" style="left:184.00px;top:605.80px;width:135.67px;height:18.00px;background:#e5f2fd;border:1px solid #bbdcfe;border-radius:3px;"></div>
<div class="t" style="left:189.70px;top:607.94px;font-size:13.3px;font-weight:400;color:#2c5cc5;-webkit-text-stroke:0.45px currentColor;">Customer responded</div>
<div class="b" style="left:324.17px;top:605.80px;width:34.67px;height:18.00px;background:#fff;border:1px solid #cfd7df;border-radius:2px;"></div>
<div class="t" style="left:330.17px;top:608.64px;font-size:12px;font-weight:400;color:#5f6e7b;-webkit-text-stroke:0.2px currentColor;">amy</div>
<div class="t" style="left:184.00px;top:633.90px;font-size:15px;font-weight:400;color:#12344d;-webkit-text-stroke:0.18px currentColor;">Urgent Delivery</div>
<div class="t" style="left:291.48px;top:633.90px;font-size:15px;font-weight:400;color:#687885;">#14648</div>
<svg class="s" style="left:184.00px;top:657.00px;" width="14" height="11" viewBox="0 0 14 11" fill="none"><rect x="0.75" y="0.75" width="12.3" height="9" rx="1.2" stroke="#2f4a60" stroke-width="1.4"/><path d="M2.5 3.2 L6.9 6 L11.3 3.2" stroke="#2f4a60" stroke-width="1.3" stroke-linejoin="round"/></svg>
<div class="t" style="left:204.50px;top:654.49px;font-size:13.6px;font-weight:400;color:#28435a;-webkit-text-stroke:0.18px currentColor;">Francesca</div>
<div class="t" style="left:271.97px;top:654.49px;font-size:13.6px;font-weight:400;color:#8a96a0;">(Viatech)</div>
<div class="b" style="left:333.62px;top:661.50px;width:3.00px;height:3.00px;background:#75828e;border-radius:50%;"></div>
<div class="t" style="left:343.12px;top:654.15px;font-size:14px;font-weight:400;color:#75828e;">Customer responded 4 hours ago</div>
<div class="b" style="left:558.20px;top:661.50px;width:3.00px;height:3.00px;background:#75828e;border-radius:50%;"></div>
<div class="t" style="left:567.70px;top:654.15px;font-size:14px;font-weight:400;color:#75828e;">Pending for 4 hours</div>
<div class="b" style="left:903.50px;top:606.30px;width:8.50px;height:8.30px;background:#4d94ea;border-radius:1.5px;"></div>
<div class="t" style="left:922.30px;top:603.96px;font-size:13.75px;font-weight:400;color:#1f3b52;-webkit-text-stroke:0.18px currentColor;">Medium</div>
<svg class="s" style="left:977.21px;top:609.30px;" width="8" height="6" viewBox="0 0 8 6" fill="none"><path d="M1 1 L4 4 L7 1" stroke="#2f4a5f" stroke-width="1.3" stroke-linecap="round" stroke-linejoin="round"/></svg>
<svg class="s" style="left:902.50px;top:630.50px;" width="12" height="12" viewBox="0 0 12 12" fill="none"><circle cx="5" cy="3.6" r="2.4" stroke="#2f4a5f" stroke-width="1.15"/><path d="M1.2 10.8 Q1.5 7.3 5 7.3 Q7 7.3 7.9 8.4" stroke="#2f4a5f" stroke-width="1.15" stroke-linecap="round"/><circle cx="9.2" cy="10" r="1.2" fill="#2f4a5f"/></svg>
<div class="t" style="left:922.30px;top:629.36px;font-size:13.75px;font-weight:400;color:#1f3b52;-webkit-text-stroke:0.18px currentColor;">Purchase a... / Amy Peach</div>
<svg class="s" style="left:1090.83px;top:634.80px;" width="8" height="6" viewBox="0 0 8 6" fill="none"><path d="M1 1 L4 4 L7 1" stroke="#2f4a5f" stroke-width="1.3" stroke-linecap="round" stroke-linejoin="round"/></svg>
<svg class="s" style="left:901.00px;top:658.50px;" width="15" height="12" viewBox="0 0 15 12" fill="none"><path d="M0.8 6 H3.5 L5.5 1.5 L8.8 10.5 L10.8 5.8 H14" stroke="#2f4a5f" stroke-width="1.25" stroke-linecap="round" stroke-linejoin="round"/></svg>
<div class="t" style="left:922.30px;top:656.66px;font-size:13.75px;font-weight:400;color:#1f3b52;-webkit-text-stroke:0.18px currentColor;">Pending</div>
<svg class="s" style="left:979.77px;top:662.00px;" width="8" height="6" viewBox="0 0 8 6" fill="none"><path d="M1 1 L4 4 L7 1" stroke="#2f4a5f" stroke-width="1.3" stroke-linecap="round" stroke-linejoin="round"/></svg>
<div class="b" style="left:76.50px;top:697.10px;width:1077.50px;height:103.50px;background:#fff;border-radius:3px;box-shadow:0 1px 1px rgba(18,52,77,0.10);"></div>
<div class="b" style="left:92.00px;top:741.65px;width:14.50px;height:14.50px;background:#fff;border:1.2px solid #d5dde4;border-radius:2.5px;"></div>
<div class="b" style="left:122.00px;top:726.00px;width:45.00px;height:45.00px;background:#d5e6fb;border-radius:3px;"></div>
<div class="t" style="left:122px;top:727.5px;width:45px;height:45px;line-height:45px;text-align:center;font-size:14.5px;color:#93a6bd;-webkit-text-stroke:0.3px currentColor;">H</div>
<div class="b" style="left:184.00px;top:718.40px;width:135.67px;height:18.00px;background:#e5f2fd;border:1px solid #bbdcfe;border-radius:3px;"></div>
<div class="t" style="left:189.70px;top:720.54px;font-size:13.3px;font-weight:400;color:#2c5cc5;-webkit-text-stroke:0.45px currentColor;">Customer responded</div>
<div class="b" style="left:324.17px;top:718.40px;width:34.67px;height:18.00px;background:#fff;border:1px solid #cfd7df;border-radius:2px;"></div>
<div class="t" style="left:330.17px;top:721.24px;font-size:12px;font-weight:400;color:#5f6e7b;-webkit-text-stroke:0.2px currentColor;">amy</div>
<div class="t" style="left:184.00px;top:746.20px;font-size:15px;font-weight:400;color:#12344d;-webkit-text-stroke:0.18px currentColor;">Cash on Delivery?</div>
<div class="t" style="left:310.66px;top:746.20px;font-size:15px;font-weight:400;color:#687885;">#14647</div>
<svg class="s" style="left:184.00px;top:767.50px;" width="13" height="12" viewBox="0 0 13 12" fill="none"><rect x="0.75" y="0.75" width="11.5" height="10.5" rx="1.5" stroke="#2f4a60" stroke-width="1.4"/><path d="M1 3.8 H12" stroke="#2f4a60" stroke-width="1.3"/><path d="M2 2.2 H11" stroke="#2f4a60" stroke-width="1.3" stroke-dasharray="1 1"/><path d="M3 6.2 H10 M3 8.6 H10" stroke="#2f4a60" stroke-width="1.1"/></svg>
<div class="t" style="left:204.50px;top:767.09px;font-size:13.6px;font-weight:400;color:#28435a;-webkit-text-stroke:0.18px currentColor;">Helen White</div>
<div class="t" style="left:282.55px;top:767.09px;font-size:13.6px;font-weight:400;color:#8a96a0;">(Acme)</div>
<div class="b" style="left:333.86px;top:774.10px;width:3.00px;height:3.00px;background:#75828e;border-radius:50%;"></div>
<div class="t" style="left:343.36px;top:766.75px;font-size:14px;font-weight:400;color:#75828e;">Customer responded 4 hours ago</div>
<div class="b" style="left:558.44px;top:774.10px;width:3.00px;height:3.00px;background:#75828e;border-radius:50%;"></div>
<div class="t" style="left:567.94px;top:766.75px;font-size:14px;font-weight:400;color:#75828e;">Due in 8 hours</div>
<div class="b" style="left:903.50px;top:718.40px;width:8.50px;height:8.30px;background:#ffd012;border-radius:1.5px;"></div>
<div class="t" style="left:922.30px;top:716.06px;font-size:13.75px;font-weight:400;color:#1f3b52;-webkit-text-stroke:0.18px currentColor;">High</div>
<svg class="s" style="left:956.58px;top:721.40px;" width="8" height="6" viewBox="0 0 8 6" fill="none"><path d="M1 1 L4 4 L7 1" stroke="#2f4a5f" stroke-width="1.3" stroke-linecap="round" stroke-linejoin="round"/></svg>
<svg class="s" style="left:902.50px;top:742.60px;" width="12" height="12" viewBox="0 0 12 12" fill="none"><circle cx="5" cy="3.6" r="2.4" stroke="#2f4a5f" stroke-width="1.15"/><path d="M1.2 10.8 Q1.5 7.3 5 7.3 Q7 7.3 7.9 8.4" stroke="#2f4a5f" stroke-width="1.15" stroke-linecap="round"/><circle cx="9.2" cy="10" r="1.2" fill="#2f4a5f"/></svg>
<div class="t" style="left:922.30px;top:741.46px;font-size:13.75px;font-weight:400;color:#1f3b52;-webkit-text-stroke:0.18px currentColor;">Purchase a... / Amy Peach</div>
<svg class="s" style="left:1090.83px;top:746.90px;" width="8" height="6" viewBox="0 0 8 6" fill="none"><path d="M1 1 L4 4 L7 1" stroke="#2f4a5f" stroke-width="1.3" stroke-linecap="round" stroke-linejoin="round"/></svg>
<svg class="s" style="left:901.00px;top:770.60px;" width="15" height="12" viewBox="0 0 15 12" fill="none"><path d="M0.8 6 H3.5 L5.5 1.5 L8.8 10.5 L10.8 5.8 H14" stroke="#2f4a5f" stroke-width="1.25" stroke-linecap="round" stroke-linejoin="round"/></svg>
<div class="t" style="left:922.30px;top:768.76px;font-size:13.75px;font-weight:400;color:#1f3b52;-webkit-text-stroke:0.18px currentColor;">Open</div>
<svg class="s" style="left:962.94px;top:774.10px;" width="8" height="6" viewBox="0 0 8 6" fill="none"><path d="M1 1 L4 4 L7 1" stroke="#2f4a5f" stroke-width="1.3" stroke-linecap="round" stroke-linejoin="round"/></svg>
<div class="b" style="left:76.50px;top:809.00px;width:1077.50px;height:104.50px;background:#fff;border-radius:3px;box-shadow:0 1px 1px rgba(18,52,77,0.10);"></div>
<div class="b" style="left:92.00px;top:854.05px;width:14.50px;height:14.50px;background:#fff;border:1.2px solid #d5dde4;border-radius:2.5px;"></div>
<div class="b" style="left:122.00px;top:838.50px;width:45.00px;height:45.00px;background:#dfd3f6;border-radius:3px;"></div>
<div class="t" style="left:122px;top:840.0px;width:45px;height:45px;line-height:45px;text-align:center;font-size:14.5px;color:#a095b8;-webkit-text-stroke:0.3px currentColor;">M</div>
<div class="b" style="left:184.00px;top:830.50px;width:135.67px;height:18.00px;background:#e5f2fd;border:1px solid #bbdcfe;border-radius:3px;"></div>
<div class="t" style="left:189.70px;top:832.64px;font-size:13.3px;font-weight:400;color:#2c5cc5;-webkit-text-stroke:0.45px currentColor;">Customer responded</div>
<div class="b" style="left:324.17px;top:830.50px;width:34.67px;height:18.00px;background:#fff;border:1px solid #cfd7df;border-radius:2px;"></div>
<div class="t" style="left:330.17px;top:833.34px;font-size:12px;font-weight:400;color:#5f6e7b;-webkit-text-stroke:0.2px currentColor;">amy</div>
<div class="t" style="left:184.00px;top:858.30px;font-size:15px;font-weight:400;color:#12344d;-webkit-text-stroke:0.18px currentColor;">Free delivery</div>
<div class="t" style="left:274.80px;top:858.30px;font-size:15px;font-weight:400;color:#687885;">#14646</div>
<svg class="s" style="left:184.00px;top:880.00px;" width="14" height="14" viewBox="0 0 14 14" fill="none"><path d="M2.2 11.5 A6 6 0 1 1 4 12.6 L1.2 13 Z" stroke="#2f4a60" stroke-width="1.3" stroke-linejoin="round"/><path d="M4.5 5.8 H9.5 M4.5 8.2 H7.5" stroke="#2f4a60" stroke-width="1.3" stroke-linecap="round"/></svg>
<div class="t" style="left:204.50px;top:879.79px;font-size:13.6px;font-weight:400;color:#28435a;-webkit-text-stroke:0.18px currentColor;">Mary Roberts</div>
<div class="t" style="left:290.09px;top:879.79px;font-size:13.6px;font-weight:400;color:#8a96a0;">(Acme)</div>
<div class="b" style="left:341.41px;top:886.80px;width:3.00px;height:3.00px;background:#75828e;border-radius:50%;"></div>
<div class="t" style="left:350.91px;top:879.45px;font-size:14px;font-weight:400;color:#75828e;">Customer responded 4 hours ago</div>
<div class="b" style="left:565.98px;top:886.80px;width:3.00px;height:3.00px;background:#75828e;border-radius:50%;"></div>
<div class="t" style="left:575.48px;top:879.45px;font-size:14px;font-weight:400;color:#75828e;">Waiting on Warehouse Team for 5 hours</div>
<div class="b" style="left:903.50px;top:830.30px;width:8.50px;height:8.30px;background:#eb3e47;border-radius:1.5px;"></div>
<div class="t" style="left:922.30px;top:827.96px;font-size:13.75px;font-weight:400;color:#1f3b52;-webkit-text-stroke:0.18px currentColor;">Urgent</div>
<svg class="s" style="left:969.58px;top:833.30px;" width="8" height="6" viewBox="0 0 8 6" fill="none"><path d="M1 1 L4 4 L7 1" stroke="#2f4a5f" stroke-width="1.3" stroke-linecap="round" stroke-linejoin="round"/></svg>
<svg class="s" style="left:902.50px;top:854.50px;" width="12" height="12" viewBox="0 0 12 12" fill="none"><circle cx="5" cy="3.6" r="2.4" stroke="#2f4a5f" stroke-width="1.15"/><path d="M1.2 10.8 Q1.5 7.3 5 7.3 Q7 7.3 7.9 8.4" stroke="#2f4a5f" stroke-width="1.15" stroke-linecap="round"/><circle cx="9.2" cy="10" r="1.2" fill="#2f4a5f"/></svg>
<div class="t" style="left:922.30px;top:853.36px;font-size:13.75px;font-weight:400;color:#1f3b52;-webkit-text-stroke:0.18px currentColor;">Purchase a... / Amy Peach</div>
<svg class="s" style="left:1090.83px;top:858.80px;" width="8" height="6" viewBox="0 0 8 6" fill="none"><path d="M1 1 L4 4 L7 1" stroke="#2f4a5f" stroke-width="1.3" stroke-linecap="round" stroke-linejoin="round"/></svg>
<svg class="s" style="left:901.00px;top:882.50px;" width="15" height="12" viewBox="0 0 15 12" fill="none"><path d="M0.8 6 H3.5 L5.5 1.5 L8.8 10.5 L10.8 5.8 H14" stroke="#2f4a5f" stroke-width="1.25" stroke-linecap="round" stroke-linejoin="round"/></svg>
<div class="t" style="left:922.30px;top:880.66px;font-size:13.75px;font-weight:400;color:#1f3b52;-webkit-text-stroke:0.18px currentColor;">Waiting on Warehouse Team</div>
<svg class="s" style="left:1104.58px;top:886.00px;" width="8" height="6" viewBox="0 0 8 6" fill="none"><path d="M1 1 L4 4 L7 1" stroke="#2f4a5f" stroke-width="1.3" stroke-linecap="round" stroke-linejoin="round"/></svg>
<div class="b" style="left:76.50px;top:921.60px;width:1077.50px;height:10.00px;background:#fff;border-radius:3px;"></div>
<div class="t" style="left:1182.30px;top:143.64px;font-size:12px;font-weight:700;color:#2c4a62;">FILTERS</div>
<div class="b" style="left:1427.50px;top:132.00px;width:32.50px;height:32.50px;background:linear-gradient(#fff,#f5f7f9);border:1px solid #cfd7df;border-radius:4px;"></div>
<svg class="s" style="left:1435.00px;top:139.50px;" width="18" height="18" viewBox="0 0 18 18" fill="none"><circle cx="7.5" cy="7.5" r="5.8" stroke="#12344d" stroke-width="1.9"/><path d="M11.8 11.8 L15.8 15.8" stroke="#12344d" stroke-width="2" stroke-linecap="round"/></svg>
<div class="t" style="left:1182.00px;top:181.93px;font-size:13.2px;font-weight:400;color:#475867;-webkit-text-stroke:0.45px currentColor;">Agents</div>
<div class="b" style="left:1182.00px;top:202.30px;width:240.00px;height:32.20px;background:#fff;border:1px solid #cfd7df;border-radius:4px;"></div>
<div class="t" style="left:1194.50px;top:211.10px;font-size:15px;font-weight:400;color:#a3afb9;">Any</div>
<svg class="s" style="left:1402.00px;top:215.80px;" width="8" height="6" viewBox="0 0 8 6" fill="none"><path d="M1 1 L4 4 L7 1" stroke="#12344d" stroke-width="1.7" stroke-linecap="round" stroke-linejoin="round"/></svg>
<div class="t" style="left:1182.00px;top:258.18px;font-size:13.2px;font-weight:400;color:#475867;-webkit-text-stroke:0.45px currentColor;">Groups</div>
<div class="b" style="left:1182.00px;top:278.55px;width:240.00px;height:32.20px;background:#fff;border:1px solid #cfd7df;border-radius:4px;"></div>
<div class="t" style="left:1194.50px;top:287.35px;font-size:15px;font-weight:400;color:#a3afb9;">Any</div>
<svg class="s" style="left:1402.00px;top:292.05px;" width="8" height="6" viewBox="0 0 8 6" fill="none"><path d="M1 1 L4 4 L7 1" stroke="#12344d" stroke-width="1.7" stroke-linecap="round" stroke-linejoin="round"/></svg>
<div class="t" style="left:1182.00px;top:334.43px;font-size:13.2px;font-weight:400;color:#475867;-webkit-text-stroke:0.45px currentColor;">Created</div>
<div class="b" style="left:1182.00px;top:354.80px;width:273.00px;height:32.20px;background:#fff;border:1px solid #cfd7df;border-radius:4px;"></div>
<div class="t" style="left:1195.60px;top:363.39px;font-size:15.25px;font-weight:400;color:#12344d;-webkit-text-stroke:0.45px currentColor;">Last 30 days</div>
<svg class="s" style="left:1435.00px;top:368.30px;" width="8" height="6" viewBox="0 0 8 6" fill="none"><path d="M1 1 L4 4 L7 1" stroke="#12344d" stroke-width="1.7" stroke-linecap="round" stroke-linejoin="round"/></svg>
<div class="t" style="left:1182.00px;top:410.68px;font-size:13.2px;font-weight:400;color:#475867;-webkit-text-stroke:0.45px currentColor;">Due by</div>
<div class="b" style="left:1182.00px;top:431.05px;width:273.00px;height:32.20px;background:#fff;border:1px solid #cfd7df;border-radius:4px;"></div>
<div class="t" style="left:1194.50px;top:439.85px;font-size:15px;font-weight:400;color:#a3afb9;">Any</div>
<svg class="s" style="left:1435.00px;top:444.55px;" width="8" height="6" viewBox="0 0 8 6" fill="none"><path d="M1 1 L4 4 L7 1" stroke="#12344d" stroke-width="1.7" stroke-linecap="round" stroke-linejoin="round"/></svg>
<div class="t" style="left:1182.00px;top:486.93px;font-size:13.2px;font-weight:400;color:#475867;-webkit-text-stroke:0.45px currentColor;">Skill</div>
<div class="b" style="left:1182.00px;top:507.30px;width:273.00px;height:32.20px;background:#fff;border:1px solid #cfd7df;border-radius:4px;"></div>
<div class="t" style="left:1194.50px;top:516.10px;font-size:15px;font-weight:400;color:#a3afb9;">Any</div>
<svg class="s" style="left:1435.00px;top:520.80px;" width="8" height="6" viewBox="0 0 8 6" fill="none"><path d="M1 1 L4 4 L7 1" stroke="#12344d" stroke-width="1.7" stroke-linecap="round" stroke-linejoin="round"/></svg>
<div class="t" style="left:1182.00px;top:563.18px;font-size:13.2px;font-weight:400;color:#475867;-webkit-text-stroke:0.45px currentColor;">Status</div>
<div class="b" style="left:1182.00px;top:583.55px;width:273.00px;height:32.20px;background:#fff;border:1px solid #cfd7df;border-radius:4px;"></div>
<div class="t" style="left:1194.50px;top:592.35px;font-size:15px;font-weight:400;color:#a3afb9;">Any</div>
<svg class="s" style="left:1435.00px;top:597.05px;" width="8" height="6" viewBox="0 0 8 6" fill="none"><path d="M1 1 L4 4 L7 1" stroke="#12344d" stroke-width="1.7" stroke-linecap="round" stroke-linejoin="round"/></svg>
<div class="t" style="left:1182.00px;top:639.43px;font-size:13.2px;font-weight:400;color:#475867;-webkit-text-stroke:0.45px currentColor;">Priority</div>
<div class="b" style="left:1182.00px;top:659.80px;width:273.00px;height:32.20px;background:#fff;border:1px solid #cfd7df;border-radius:4px;"></div>
<div class="t" style="left:1194.50px;top:668.60px;font-size:15px;font-weight:400;color:#a3afb9;">Any</div>
<svg class="s" style="left:1435.00px;top:673.30px;" width="8" height="6" viewBox="0 0 8 6" fill="none"><path d="M1 1 L4 4 L7 1" stroke="#12344d" stroke-width="1.7" stroke-linecap="round" stroke-linejoin="round"/></svg>
<div class="t" style="left:1182.00px;top:715.68px;font-size:13.2px;font-weight:400;color:#475867;-webkit-text-stroke:0.45px currentColor;">Type</div>
<div class="b" style="left:1182.00px;top:736.05px;width:273.00px;height:32.20px;background:#fff;border:1px solid #cfd7df;border-radius:4px;"></div>
<div class="t" style="left:1194.50px;top:744.85px;font-size:15px;font-weight:400;color:#a3afb9;">Any</div>
<svg class="s" style="left:1435.00px;top:749.55px;" width="8" height="6" viewBox="0 0 8 6" fill="none"><path d="M1 1 L4 4 L7 1" stroke="#12344d" stroke-width="1.7" stroke-linecap="round" stroke-linejoin="round"/></svg>
<div class="t" style="left:1182.00px;top:791.93px;font-size:13.2px;font-weight:400;color:#475867;-webkit-text-stroke:0.45px currentColor;">Source</div>
<div class="b" style="left:1182.00px;top:812.30px;width:273.00px;height:32.20px;background:#fff;border:1px solid #cfd7df;border-radius:4px;"></div>
<div class="t" style="left:1194.50px;top:821.10px;font-size:15px;font-weight:400;color:#a3afb9;">Any</div>
<svg class="s" style="left:1435.00px;top:825.80px;" width="8" height="6" viewBox="0 0 8 6" fill="none"><path d="M1 1 L4 4 L7 1" stroke="#12344d" stroke-width="1.7" stroke-linecap="round" stroke-linejoin="round"/></svg>
<div class="t" style="left:1182.00px;top:868.18px;font-size:13.2px;font-weight:400;color:#475867;-webkit-text-stroke:0.45px currentColor;">Tags</div>
<div class="b" style="left:1182.00px;top:888.55px;width:273.00px;height:32.20px;background:#fff;border:1px solid #cfd7df;border-radius:4px;"></div>
<div class="t" style="left:1194.50px;top:897.35px;font-size:15px;font-weight:400;color:#a3afb9;">Any</div>
<svg class="s" style="left:1435.00px;top:902.05px;" width="8" height="6" viewBox="0 0 8 6" fill="none"><path d="M1 1 L4 4 L7 1" stroke="#12344d" stroke-width="1.7" stroke-linecap="round" stroke-linejoin="round"/></svg>
<svg class="s" style="left:1428.00px;top:210.50px;" width="14" height="14" viewBox="0 0 14 14" fill="none"><path d="M1.5 10 V7 A5.5 5.5 0 0 1 12.5 7 V10" stroke="#75828e" stroke-width="1.3"/><rect x="1" y="8.5" width="3" height="4.5" rx="1.2" stroke="#75828e" stroke-width="1.2"/><rect x="10" y="8.5" width="3" height="4.5" rx="1.2" stroke="#75828e" stroke-width="1.2"/></svg>
<svg class="s" style="left:1445.50px;top:215.00px;" width="8" height="6" viewBox="0 0 8 6" fill="none"><path d="M1 1 L4 4 L7 1" stroke="#75828e" stroke-width="1.5" stroke-linecap="round" stroke-linejoin="round"/></svg>
<svg class="s" style="left:1427.50px;top:287.50px;" width="14" height="11" viewBox="0 0 14 11" fill="none"><circle cx="4.5" cy="3" r="2.2" stroke="#75828e" stroke-width="1.1"/><path d="M0.8 10 Q1 6.5 4.5 6.5 Q8 6.5 8.2 10" stroke="#75828e" stroke-width="1.1"/><circle cx="10" cy="3" r="1.8" stroke="#75828e" stroke-width="1.1"/><path d="M9 6.5 Q12.5 6.3 13 9.5" stroke="#75828e" stroke-width="1.1"/></svg>
<svg class="s" style="left:1445.50px;top:291.50px;" width="8" height="6" viewBox="0 0 8 6" fill="none"><path d="M1 1 L4 4 L7 1" stroke="#75828e" stroke-width="1.5" stroke-linecap="round" stroke-linejoin="round"/></svg>
<div class="b" style="left:1401.5px;top:844.3px;width:62px;height:62px;background:#02bf72;border-radius:50% 9px 50% 50%;box-shadow:0 4px 8px rgba(0,0,0,0.25);z-index:5;"></div>
<svg class="s" style="left:1421.50px;top:866.00px;z-index:6;" width="24" height="18" viewBox="0 0 24 18" fill="none"><path d="M0 3 a3 3 0 0 1 3 -3 H20.5 a3 3 0 0 1 3 3 V14.5 a3 3 0 0 1 -3 3 H0 Z" fill="#fff"/><path d="M4.5 6 H19 M4.5 11 H13" stroke="#02bf72" stroke-width="2.2" stroke-linecap="round"/></svg>
</body></html>
